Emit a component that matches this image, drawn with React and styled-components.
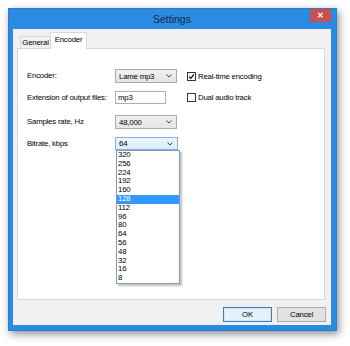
import React, { useState } from 'react';
import styled, { createGlobalStyle, css } from 'styled-components';

const GlobalStyle = createGlobalStyle`
  html, body {
    margin: 0;
    padding: 0;
    background: #ffffff;
  }
  body {
    font-family: "Liberation Sans", Arial, sans-serif;
  }
`;

const Page = styled.div`
  width: 350px;
  height: 346px;
  padding: 8px 0 0 8px;
  box-sizing: border-box;
`;

const Window = styled.div`
  width: 329px;
  height: 323px;
  box-sizing: border-box;
  background: #2b8be2;
  border: 1px solid #2a7fcf;
  padding: 0 5px 5px 4px;
  display: flex;
  flex-direction: column;
  box-shadow: 2px 3px 8px rgba(0, 0, 0, 0.45);
`;

const TitleBar = styled.div`
  height: 20px;
  display: grid;
  grid-template-columns: 1fr auto 1fr;
  align-items: start;
`;

const Title = styled.div`
  grid-column: 2;
  font-size: 10.5px;
  line-height: 20px;
  color: #13294a;
`;

const CloseButton = styled.div`
  grid-column: 3;
  justify-self: end;
  width: 21px;
  height: 13px;
  background: #c75050;
  color: #ffffff;
  font-size: 8px;
  font-weight: bold;
  display: flex;
  align-items: center;
  justify-content: center;
`;

const Client = styled.div`
  flex: 1;
  background: #f0f0f0;
  display: flex;
  flex-direction: column;
  padding: 3px 6px 3px 4px;
`;

const TabStrip = styled.div`
  height: 16px;
  display: flex;
  align-items: flex-end;
  padding-left: 3px;
  position: relative;
  z-index: 1;
`;

const Tab = styled.div`
  box-sizing: border-box;
  font-size: 7.8px;
  letter-spacing: -0.2px;
  color: #000;
  border: 1px solid #d9d9d9;
  border-bottom: none;
  display: flex;
  align-items: center;
  justify-content: center;
  ${(p) =>
    p.$active
      ? css`
          height: 17px;
          width: 37px;
          background: #ffffff;
          margin-bottom: -1px;
          padding-bottom: 3px;
        `
      : css`
          height: 12px;
          width: 30px;
          background: #f0f0f0;
          border-right: none;
        `}
`;

const Panel = styled.div`
  flex: 1;
  background: #ffffff;
  border: 1px solid #d9d9d9;
  padding: 20px 0 0 9px;
`;

const Form = styled.div`
  display: grid;
  grid-template-columns: 88px 72px auto;
  grid-template-rows: 22px 24px 22px 13px;
  align-items: start;
`;

const Label = styled.div`
  font-size: 7.8px;
  letter-spacing: -0.2px;
  color: #000;
  padding-top: 2px;
`;

const Combo = styled.div`
  position: relative;
  box-sizing: border-box;
  width: ${(p) => p.$width || 62}px;
  height: ${(p) => p.$height || 14}px;
  border: 1px solid ${(p) => (p.$focused ? '#7eb4ea' : '#acacac')};
  background: ${(p) =>
    p.$focused
      ? 'linear-gradient(#ecf4fc, #dcecfc)'
      : 'linear-gradient(#f0f0f0, #e5e5e5)'};
  display: flex;
  align-items: center;
  justify-content: space-between;
  padding: 0 4px 0 3px;
  font-size: 7.8px;
  letter-spacing: -0.2px;
  color: #000;
`;

const Chevron = styled.svg`
  width: 6px;
  height: 4px;
`;

const TextBox = styled.div`
  box-sizing: border-box;
  width: 51px;
  height: 13px;
  border: 1px solid #abadb3;
  background: #ffffff;
  font-size: 7.8px;
  letter-spacing: -0.2px;
  padding: 1px 2px;
  line-height: 10px;
`;

const CheckRow = styled.label`
  display: flex;
  align-items: center;
  gap: 2px;
  font-size: 7.8px;
  letter-spacing: -0.2px;
  color: #000;
  margin-top: ${(p) => p.$top || 0}px;
`;

const Box = styled.span`
  box-sizing: border-box;
  width: 9px;
  height: 9px;
  border: 1px solid #333333;
  background: #ffffff;
  display: flex;
  align-items: center;
  justify-content: center;
`;

const DropList = styled.ul`
  position: absolute;
  top: 12px;
  left: 0;
  width: 64px;
  box-sizing: border-box;
  margin: 0;
  padding: 0;
  list-style: none;
  background: #ffffff;
  border: 1px solid #7f9db9;
  box-shadow: 2px 2px 2px rgba(0, 0, 0, 0.25);
  z-index: 5;
`;

const DropItem = styled.li`
  height: 8.8px;
  line-height: 8.8px;
  font-size: 7.8px;
  letter-spacing: -0.2px;
  padding-left: 1px;
  color: ${(p) => (p.$selected ? '#ffffff' : '#000000')};
  background: ${(p) => (p.$selected ? '#3399ff' : 'transparent')};
`;

const Footer = styled.div`
  display: flex;
  justify-content: flex-end;
  gap: 5px;
  margin-top: 7px;
  margin-right: -1px;
`;

const Button = styled.button`
  box-sizing: border-box;
  width: 49px;
  height: 15px;
  padding: 0;
  font-family: "Liberation Sans", Arial, sans-serif;
  font-size: 7.8px;
  letter-spacing: -0.2px;
  color: #000;
  border: 1px solid ${(p) => (p.$default ? '#3c7fb1' : '#adadad')};
  background: ${(p) => (p.$default ? '#e5f1fb' : '#e1e1e1')};
  box-shadow: ${(p) => (p.$default ? 'inset 0 0 0 1px #cfe6fa' : 'none')};
`;

const ChevronIcon = () => (
  <Chevron viewBox="0 0 6 4">
    <path d="M0.5 0.5 L3 3 L5.5 0.5" fill="none" stroke="#444" strokeWidth="1" />
  </Chevron>
);

const CheckIcon = () => (
  <svg width="7" height="7" viewBox="0 0 7 7">
    <path d="M1 3.6 L2.7 5.3 L6 1.3" fill="none" stroke="#111" strokeWidth="1.3" />
  </svg>
);

const bitrates = ['320', '256', '224', '192', '160', '128', '112', '96', '80', '64', '56', '48', '32', '16', '8'];

export default function App() {
  const [hover] = useState('128');

  return (
    <>
      <GlobalStyle />
      <Page>
        <Window>
          <TitleBar>
            <Title>Settings</Title>
            <CloseButton>✕</CloseButton>
          </TitleBar>
          <Client>
            <TabStrip>
              <Tab>General</Tab>
              <Tab $active>Encoder</Tab>
            </TabStrip>
            <Panel>
              <Form>
                <Label>Encoder:</Label>
                <Combo>
                  <span>Lame mp3</span>
                  <ChevronIcon />
                </Combo>
                <CheckRow $top={3}>
                  <Box>
                    <CheckIcon />
                  </Box>
                  Real-time encoding
                </CheckRow>

                <Label>Extension of output files:</Label>
                <TextBox>mp3</TextBox>
                <CheckRow $top={2}>
                  <Box />
                  Dual audio track
                </CheckRow>

                <Label>Samples rate, Hz</Label>
                <Combo>
                  <span>48,000</span>
                  <ChevronIcon />
                </Combo>
                <div />

                <Label>Bitrate, kbps</Label>
                <Combo $focused $width={63} $height={13}>
                  <span>64</span>
                  <ChevronIcon />
                  <DropList>
                    {bitrates.map((b) => (
                      <DropItem key={b} $selected={b === hover}>
                        {b}
                      </DropItem>
                    ))}
                  </DropList>
                </Combo>
                <div />
              </Form>
            </Panel>
            <Footer>
              <Button $default>OK</Button>
              <Button>Cancel</Button>
            </Footer>
          </Client>
        </Window>
      </Page>
    </>
  );
}
